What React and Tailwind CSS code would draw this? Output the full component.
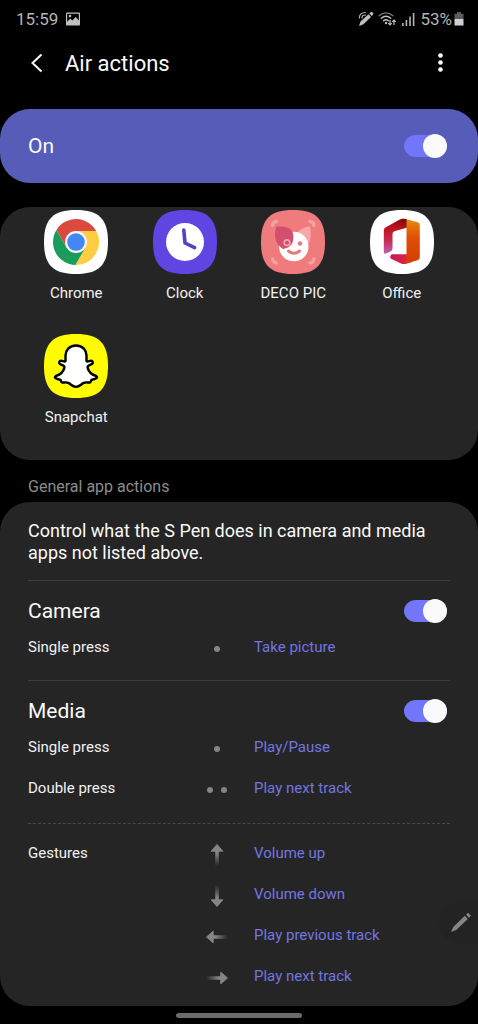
import { useId, useState } from 'react';

function Tile({ fill, children }) {
  return (
    <svg viewBox="0 0 64 64" className="size-16" aria-hidden="true">
      <path fill={fill} d="M32 0C55 0 64 9 64 32S55 64 32 64 0 55 0 32 9 0 32 0Z" />
      {children}
    </svg>
  );
}

function ChromeIcon() {
  return (
    <Tile fill="#ffffff">
      <path fill="#da4a3f" d="M12.4 20A23 23 0 0 1 52.2 21L32 21L22.5 37.5Z" />
      <path fill="#fecd41" d="M52.2 21A23 23 0 0 1 31.4 55L41.5 37.5L32 21Z" />
      <path fill="#1a9d5b" d="M31.4 55A23 23 0 0 1 12.4 20L22.5 37.5L41.5 37.5Z" />
      <circle cx="32" cy="32" r="11" fill="#f4f4f4" />
      <circle cx="32" cy="32" r="8.8" fill="#4486f4" />
    </Tile>
  );
}

function ClockIcon() {
  return (
    <Tile fill="#6045e2">
      <circle cx="32" cy="32" r="19" fill="#ffffff" />
      <path d="M30.8 20L32 33L41.6 37.7" fill="none" stroke="#5540c8" strokeWidth="3.6" strokeLinecap="round" strokeLinejoin="round" />
    </Tile>
  );
}

function DecoPicIcon() {
  return (
    <Tile fill="#ef7b7d">
      <g fill="none" stroke="#f5a0a1" strokeWidth="3.4" strokeLinecap="round">
        <path d="M11.5 15.5Q12 12 15.5 11.5" />
        <path d="M49 11.5Q52.5 12 53 15.5" />
        <path d="M11.5 49Q12 52.5 15.500 53" />
        <path d="M49 53Q52.5 52.500 53 49" />
      </g>
      <path fill="#fba5a5" d="M36 23Q41 17 49 16.5Q51.5 26 47.5 34Z" />
      <circle cx="32.8" cy="36.5" r="14.7" fill="#ffffff" />
      <path fill="#d24f6f" d="M15.2 16.8Q29 15.500 32 23Q34.5 37 22 39Q11 32 15.2 16.8Z" />
      <circle cx="26" cy="32.7" r="2.8" fill="#d24f6f" stroke="#f3a5ae" strokeWidth="1.6" />
      <circle cx="39" cy="33.5" r="2.2" fill="#e8777b" />
      <path d="M27.5 41Q33 45.5 38.5 41" fill="none" stroke="#e8777b" strokeWidth="3" strokeLinecap="round" />
    </Tile>
  );
}

function OfficeIcon() {
  return (
    <Tile fill="#ffffff">
      <defs>
        <linearGradient id="office-left" x1="0" y1="0" x2="0" y2="1">
          <stop offset="0" stopColor="#9c0d12" />
          <stop offset="0.35" stopColor="#c21828" />
          <stop offset="0.6" stopColor="#c8284c" />
          <stop offset="1" stopColor="#bd62b4" />
        </linearGradient>
        <linearGradient id="office-top" x1="0" y1="1" x2="1" y2="0">
          <stop offset="0.3" stopColor="#b5121b" stopOpacity="0" />
          <stop offset="1" stopColor="#6d0606" />
        </linearGradient>
        <linearGradient id="office-right" x1="0" y1="0" x2="0" y2="1">
          <stop offset="0" stopColor="#e98a08" />
          <stop offset="0.4" stopColor="#e0500a" />
          <stop offset="1" stopColor="#d63b02" />
        </linearGradient>
        <linearGradient id="office-bottom" x1="0" y1="0" x2="1" y2="0">
          <stop offset="0" stopColor="#c9195a" />
          <stop offset="1" stopColor="#e02a35" />
        </linearGradient>
      </defs>
      <path fill="url(#office-left)" d="M13.8 20.500Q13.8 18.300 15.8 17.200L30 9.500Q33 8 37 9.500V17.500L24.5 21.300Q22.5 22 22.5 24V38.500Q22.5 40.500 20.5 41.500L16 43.500Q13.8 44.200 13.8 42Z" />
      <path fill="url(#office-top)" d="M15.8 17.200L30 9.500Q33 8 37 9.500V17.500L24.5 21.300Z" />
      <path fill="url(#office-bottom)" d="M22.5 44.300H37L42 52L35 54Q33 54.400 31 53.400L21 48.800Q20 48 20.3 46Q20.8 44.300 22.5 44.300Z" />
      <path fill="url(#office-right)" d="M36.5 9.300L47.5 12.300Q49.8 13 49.8 15.300V47.300Q49.8 49.600 47.5 50.300L34.5 54Q36.5 52.800 36.5 50.500Z" />
    </Tile>
  );
}

function SnapchatIcon() {
  return (
    <Tile fill="#fffc00">
      <path
        fill="#ffffff"
        stroke="#000000"
        strokeWidth="2.4"
        strokeLinejoin="round"
        d="M32 11.500C25 11.500 21.500 16.500 21.500 21.500V27.200C20 28 18.800 26.800 17 26.800C15.200 26.800 14.600 28.800 15.800 29.800C17.500 31.200 20.800 31.200 20.400 33.600C19.400 37.800 15.800 40.800 11.800 42C10.600 42.500 10.800 43.600 11.800 44.300C13.200 45.300 15 45.400 16.400 45.800C17.200 46.400 16.800 48.200 18.200 48.500C20 48.700 22.200 47.900 24.400 48.900C27 50.400 28.600 52.900 32 52.900S37 50.400 39.600 48.900C41.800 47.900 44 48.700 45.800 48.500C47.200 48.200 46.800 46.400 47.600 45.800C49 45.400 50.800 45.300 52.200 44.300C53.200 43.600 53.400 42.500 52.200 42C48.200 40.800 44.600 37.800 43.600 33.600C43.200 31.200 46.500 31.200 48.200 29.800C49.400 28.800 48.800 26.800 47 26.800C45.200 26.800 44 28 42.500 27.200V21.500C42.500 16.500 39 11.500 32 11.500Z"
      />
    </Tile>
  );
}

const apps = [
  { name: 'Chrome', Icon: ChromeIcon },
  { name: 'Clock', Icon: ClockIcon },
  { name: 'DECO PIC', Icon: DecoPicIcon },
  { name: 'Office', Icon: OfficeIcon },
  { name: 'Snapchat', Icon: SnapchatIcon },
];

function Switch({ id }) {
  const [on, setOn] = useState(true);
  return (
    <input
      id={id}
      type="checkbox"
      role="switch"
      checked={on}
      onChange={(e) => setOn(e.target.checked)}
      className="flex h-6 w-[43px] shrink-0 cursor-pointer appearance-none items-center justify-start rounded-full bg-[#5a5a5a] bg-clip-content py-px after:size-6 after:shrink-0 after:rounded-full after:bg-[#fafafa] after:content-[''] checked:justify-end checked:bg-[#7276fb]"
    />
  );
}

function PressDots({ count }) {
  return (
    <span className="flex gap-2" aria-hidden="true">
      <span className="size-1.5 rounded-full bg-[#858585]" />
      {count === 2 && <span className="size-1.5 rounded-full bg-[#858585]" />}
    </span>
  );
}

const arrowTurn = {
  up: 'rotate(0 12 12)',
  right: 'rotate(90 12 12)',
  down: 'rotate(180 12 12)',
  left: 'rotate(270 12 12)',
};

function GestureArrow({ direction }) {
  const fade = useId();
  return (
    <svg viewBox="0 0 24 24" className="size-6" aria-hidden="true">
      <defs>
        <linearGradient id={fade} x1="0" y1="10" x2="0" y2="23" gradientUnits="userSpaceOnUse">
          <stop offset="0" stopColor="#858585" />
          <stop offset="1" stopColor="#858585" stopOpacity="0" />
        </linearGradient>
      </defs>
      <g transform={arrowTurn[direction]}>
        <path fill={`url(#${fade})`} d="M10.2 8H13.8V23H10.2Z" />
        <path fill="#858585" stroke="#858585" strokeWidth="1" strokeLinejoin="round" d="M12 1.500L17.800 8.200H6.200Z" />
      </g>
    </svg>
  );
}

function ActionRow({ label, mark, action }) {
  return (
    <div className="grid grid-cols-[168fr_42fr_212fr] items-center text-[15px] leading-5">
      <span className="text-[#f2f2f2]">{label}</span>
      <span className="flex h-5 items-center justify-center pt-1">{mark}</span>
      <button type="button" className="cursor-pointer pl-4 text-left text-[#7276e2]">{action}</button>
    </div>
  );
}

function SectionHeading({ id, children }) {
  return (
    <div className="flex items-center justify-between pr-[3px]">
      <h2 className="text-[21px] leading-7 text-[#fafafa]">
        <label htmlFor={id}>{children}</label>
      </h2>
      <Switch id={id} />
    </div>
  );
}

function StatusBar() {
  return (
    <div className="flex h-[38px] items-center justify-between pr-[14px] pl-4 text-[17px] leading-5 text-[#b4b4b4]">
      <div className="flex items-center gap-2">
        <span>15:59</span>
        <svg viewBox="0 0 14 14" className="size-3.5" aria-hidden="true">
          <path fill="#c0c0c0" fillRule="evenodd" d="M1 0.500H13Q14 0.500 14 1.500V12.500Q14 13.500 13 13.500H1Q0 13.500 0 12.500V1.500Q0 0.500 1 0.500ZM1.200 1.800V9.800L4.300 6.500L6.300 8.500L9.800 5L12.800 8.500V1.800ZM4 2.800A1.300 1.300 0 1 1 4 5.400A1.300 1.300 0 1 1 4 2.800Z" />
        </svg>
      </div>
      <div className="flex items-center gap-1">
        <svg viewBox="0 0 16 16" className="size-4" aria-hidden="true">
          <path fill="#c0c0c0" d="M1 15L2.500 10.500L10.500 3.300L13 6L5.500 13.200ZM11.300 2.600L13 1.100Q13.800 0.600 14.800 1.500Q15.700 2.600 15 3.400L13.600 5Z" />
          <path fill="none" stroke="#b4b4b4" strokeWidth="1.200" strokeLinecap="round" d="M1.300 7Q1.500 1.500 7.500 1.500M4 7Q4 4 7.500 4" />
        </svg>
        <svg viewBox="0 0 18 16" className="mr-0.5 h-4 w-[18px]" aria-hidden="true">
          <g fill="none" stroke="#c0c0c0" strokeLinecap="round">
            <path stroke="#777777" strokeWidth="1.300" d="M1 4.800Q8 -1.200 15 4.800" />
            <path strokeWidth="1.400" d="M3.300 7.300Q8 3.300 12.700 7.300M5.500 9.700Q8 7.600 10.300 9.700" />
          </g>
          <circle cx="8" cy="12" r="1.200" fill="#c0c0c0" />
          <path fill="none" stroke="#c0c0c0" strokeWidth="1.200" d="M12 9V14M10.300 12.200L12 14L13.700 12.200M16 14V9M14.300 10.800L16 9L17.700 10.800" />
        </svg>
        <svg viewBox="0 0 14 14" className="size-3.5" aria-hidden="true">
          <path fill="#b4b4b4" d="M0 11H1.600V14H0ZM3.600 8H5.200V14H3.600ZM7.200 4.500H8.800V14H7.200ZM10.800 1H12.400V14H10.800Z" />
        </svg>
        <div className="flex items-center gap-0.5">
          <span>53%</span>
          <svg viewBox="0 0 10 14" className="h-3.5 w-2.5" aria-hidden="true">
            <path fill="#5c5c5c" d="M3 0H7V1.800H9.500V7H0.500V1.800H3Z" />
            <path fill="#d0d0d0" d="M0.500 7H9.500V13.500H0.500Z" />
          </svg>
        </div>
      </div>
    </div>
  );
}

export default function App() {
  return (
    <div className="relative min-h-screen bg-black font-['Roboto',sans-serif] text-[#fafafa]">
      <StatusBar />

      <header className="flex h-[51px] items-center px-[25px]">
        <button type="button" aria-label="Back" className="mr-4 flex size-6 cursor-pointer items-center justify-center">
          <svg viewBox="0 0 24 24" className="size-6" aria-hidden="true">
            <path d="M16.500 2.500L7.500 11L16.500 19.500" fill="none" stroke="#fafafa" strokeWidth="2" />
          </svg>
        </button>
        <h1 className="flex-1 text-[22px] leading-7">Air actions</h1>
        <button type="button" aria-label="More options" className="flex size-6 cursor-pointer items-center justify-center">
          <svg viewBox="0 0 24 24" className="size-6" aria-hidden="true">
            <g fill="#ffffff">
              <circle cx="11.500" cy="3.500" r="2.300" />
              <circle cx="11.500" cy="10.500" r="2.300" />
              <circle cx="11.500" cy="17.500" r="2.300" />
            </g>
          </svg>
        </button>
      </header>

      <main>
        <div className="mt-5 flex h-[74px] items-center justify-between rounded-[30px] bg-[#565cb8] pr-[31px] pl-7">
          <label htmlFor="air-actions" className="text-[21px] leading-7">On</label>
          <Switch id="air-actions" />
        </div>

        <section aria-label="Apps" className="mt-6 rounded-[30px] bg-[#252525] px-[22px] pt-[3px] pb-[33px]">
          <ul className="grid grid-cols-4 gap-y-[31px]">
            {apps.map(({ name, Icon }) => (
              <li key={name} className="flex justify-center">
                <button type="button" className="flex cursor-pointer flex-col items-center gap-[9px]">
                  <Icon />
                  <span className="text-[15px] leading-5 whitespace-nowrap text-[#f2f2f2]">{name}</span>
                </button>
              </li>
            ))}
          </ul>
        </section>

        <p className="mt-[17px] px-7 text-base leading-5 text-[#8c8c8c]">General app actions</p>

        <section aria-label="General app actions" className="mt-[5px] rounded-[30px] bg-[#252525] px-7 pt-[18px] pb-5">
          <p className="text-lg leading-[22px]">Control what the S Pen does in camera and media apps not listed above.</p>

          <div className="mt-4 border-t border-[#3e3e3e] pt-4">
            <SectionHeading id="camera">Camera</SectionHeading>
            <div className="mt-3">
              <ActionRow label="Single press" mark={<PressDots count={1} />} action="Take picture" />
            </div>
          </div>

          <div className="mt-[23px] border-t border-[#3e3e3e] pt-4">
            <SectionHeading id="media">Media</SectionHeading>
            <div className="mt-3 flex flex-col gap-[21px]">
              <ActionRow label="Single press" mark={<PressDots count={1} />} action="Play/Pause" />
              <ActionRow label="Double press" mark={<PressDots count={2} />} action="Play next track" />
            </div>
          </div>

          <div className="mt-[25px] flex flex-col gap-[21px] border-t border-dashed border-[#484848] pt-[19px]">
            <ActionRow label="Gestures" mark={<GestureArrow direction="up" />} action="Volume up" />
            <ActionRow mark={<GestureArrow direction="down" />} action="Volume down" />
            <ActionRow mark={<GestureArrow direction="left" />} action="Play previous track" />
            <ActionRow mark={<GestureArrow direction="right" />} action="Play next track" />
          </div>
        </section>
      </main>

      <div className="flex h-[18px] items-center justify-center">
        <span className="h-[5px] w-[126px] rounded-full bg-[#6b6b6b]" />
      </div>

      <button type="button" aria-label="Air command" className="absolute right-0 bottom-20 flex h-11 w-[39px] cursor-pointer items-center justify-center rounded-l-full bg-[#232323] pl-1">
        <svg viewBox="0 0 24 24" className="size-6" aria-hidden="true">
          <path fill="#858585" d="M2 22L4.200 17L15.800 5.800L18.800 9L7.200 20ZM17 4.700L19 2.700L22 5.800L20 7.800Z" />
        </svg>
      </button>
    </div>
  );
}
